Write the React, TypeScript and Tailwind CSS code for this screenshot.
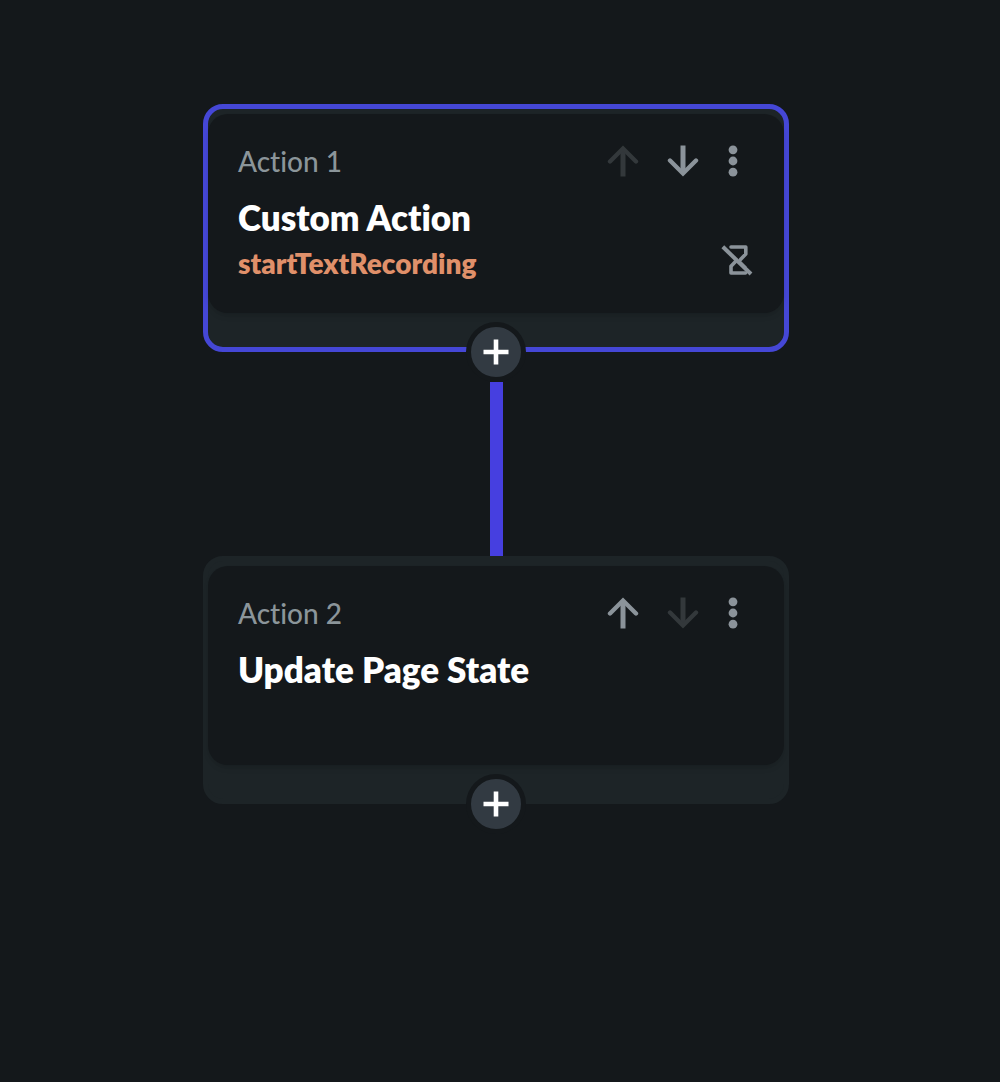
import { ReactNode } from 'react';
import { clsx } from 'clsx';

interface Action {
  id: number;
  title: string;
  detail?: string;
  selected?: boolean;
}

const actions: Action[] = [
  { id: 1, title: 'Custom Action', detail: 'startTextRecording', selected: true },
  { id: 2, title: 'Update Page State' },
];

function ArrowIcon({ down = false }: { down?: boolean }) {
  return (
    <svg viewBox="0 0 32 32" className={clsx('size-8', down && 'rotate-180')} fill="none" stroke="currentColor">
      <path d="M16 31.5V4" strokeWidth="5" />
      <path d="M3 16.5L16 3.5L29 16.5" strokeWidth="4.4" strokeLinecap="round" />
    </svg>
  );
}

function DotsIcon() {
  return (
    <svg viewBox="0 0 32 32" className="size-8" fill="currentColor">
      <circle cx="16" cy="4.8" r="4.4" />
      <circle cx="16" cy="16" r="4.4" />
      <circle cx="16" cy="27.2" r="4.4" />
    </svg>
  );
}

function NoWaitIcon() {
  return (
    <svg viewBox="0 0 32 32" className="size-8" fill="none" stroke="currentColor" strokeWidth="3.6">
      <path d="M10 3H24.8V10L19.5 15.5" strokeLinejoin="round" strokeLinecap="round" />
      <path d="M15.5 16.5L10 22.3V29H24.5" strokeLinejoin="round" strokeLinecap="round" />
      <path d="M18.5 18L24.5 24" />
      <path d="M1.8 2.8L30 30" strokeWidth="4" />
    </svg>
  );
}

function PlusIcon() {
  return (
    <svg viewBox="0 0 26 26" className="size-[26px]" fill="none" stroke="currentColor" strokeWidth="4.6" strokeLinecap="butt">
      <path d="M13 0.5V25.5M0.5 13H25.5" />
    </svg>
  );
}

interface IconButtonProps {
  label: string;
  className?: string;
  disabled?: boolean;
  children: ReactNode;
}

function IconButton({ label, className, disabled, children }: IconButtonProps) {
  return (
    <button
      type="button"
      aria-label={label}
      disabled={disabled}
      className={clsx('flex h-8 items-center justify-center text-[#8b939a] disabled:text-[#33383b]', className)}
    >
      {children}
    </button>
  );
}

function ActionCard({ action, first, last }: { action: Action; first: boolean; last: boolean }) {
  return (
    <section
      className={clsx(
        'relative w-full rounded-[20px] border-[5px] bg-[#1d2427] pt-[5px] pb-[34px]',
        action.selected ? 'border-[#4547d6]' : 'border-[#1d2427]'
      )}
    >
      <div className="flex h-[199px] flex-col rounded-[20px] bg-[#14181b] pt-[31px] pr-[31px] pl-[30px] shadow-md">
        <div className="flex items-center">
          <span className="flex-1 text-[28px] leading-8 font-medium text-[#8b959a]">Action {action.id}</span>
          <IconButton label="Move up" className="w-[60px]" disabled={first}>
            <ArrowIcon />
          </IconButton>
          <IconButton label="Move down" className="w-[60px]" disabled={last}>
            <ArrowIcon down />
          </IconButton>
          <IconButton label="More options" className="w-10">
            <DotsIcon />
          </IconButton>
        </div>
        <h2 className="mt-5 text-[35px] leading-10 font-extrabold text-white">{action.title}</h2>
        {action.detail && (
          <div className="flex items-center">
            <p className="flex-1 pt-1.5 text-[28px] leading-10 font-extrabold text-[#e0906a]">{action.detail}</p>
            <IconButton label="Do not wait for action">
              <NoWaitIcon />
            </IconButton>
          </div>
        )}
      </div>

      {/* Add button sits on the bottom edge */}
      <button
        type="button"
        aria-label="Add action"
        className="absolute -bottom-[35px] left-1/2 flex size-[60px] -translate-x-1/2 items-center justify-center rounded-full border-[5px] border-[#14181b] bg-[#323a42] text-white"
      >
        <PlusIcon />
      </button>
    </section>
  );
}

export default function App() {
  return (
    <main className="flex min-h-screen flex-col items-center bg-[#14181b] pt-[104px] pr-2 font-['Lato',sans-serif] [font-variant-ligatures:none]">
      <div className="flex w-full max-w-[586px] flex-col items-center">
        {actions.map((action, index) => (
          <div key={action.id} className="flex w-full flex-col items-center">
            {index > 0 && (
              <div className="h-[204px] w-full pt-[30px]">
                <div className="mx-auto h-full w-[13px] bg-[#463fe0]" />
              </div>
            )}
            <ActionCard action={action} first={index === 0} last={index === actions.length - 1} />
          </div>
        ))}
      </div>
    </main>
  );
}
